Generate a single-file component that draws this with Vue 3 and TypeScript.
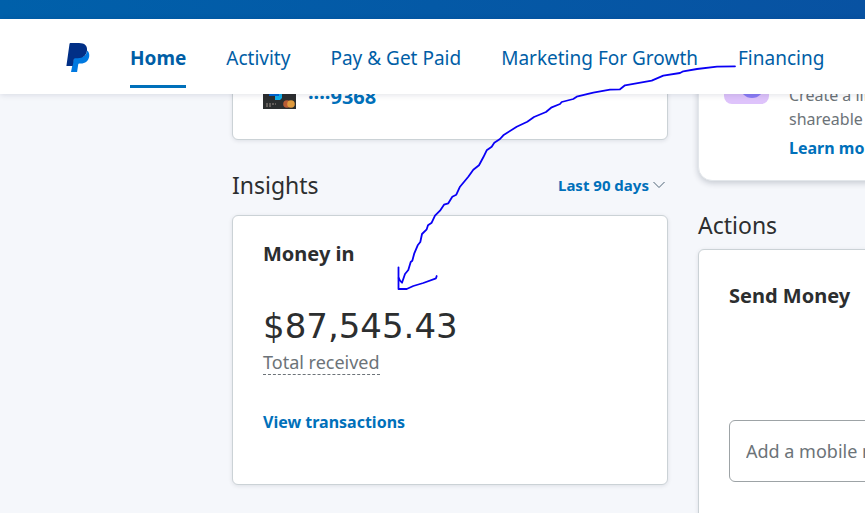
<script setup lang="ts">
import { ref } from 'vue'

interface NavItem {
  label: string
  active?: boolean
}

const navItems: NavItem[] = [
  { label: 'Home', active: true },
  { label: 'Activity' },
  { label: 'Pay & Get Paid' },
  { label: 'Marketing For Growth' },
  { label: 'Financing' },
  { label: 'More' },
]

const period = ref('Last 90 days')
const recipient = ref('')
</script>

<template>
  <div class="page">
    <div class="banner"></div>
    <header class="header">
      <a class="logo" href="#" aria-label="PayPal">
        <svg width="24" height="30" viewBox="0 0 24 30" aria-hidden="true">
          <path fill="#0079e0" d="M8 14h7c3.600 0 5.500-2.200 6-6.500 1.800 1.300 2.600 3.400 2.200 6-.7 4.600-4 7-8.400 7h-1.300c-.7 0-1.200.5-1.300 1.100L11.100 29H5z" />
          <path fill="#012f86" d="M4.300 0H13c5.600 0 8.500 2.700 8 7.500-.7 5-4 7.700-9.200 7.700H9.500c-.9 0-1.500.5-1.700 1.400L6.700 23H.4L3.500 1C3.600.4 3.900 0 4.300 0z" />
        </svg>
      </a>
      <nav class="nav" aria-label="Primary">
        <a v-for="item in navItems" :key="item.label" href="#" class="nav-link" :class="{ active: item.active }">{{ item.label }}</a>
      </nav>
    </header>

    <main class="content">
      <div class="column">
        <section class="card wallet">
          <svg class="bank-card" width="33" height="22" viewBox="0 0 33 22" aria-hidden="true">
            <rect width="33" height="22" fill="#2c2e2f" />
            <path d="M7 0h10v9h-5V9H6z" fill="#0067d5" />
            <path d="M12 9h4V5h3v6l-2 2h-5z" fill="#10aeea" />
            <path d="M3 17h10M3 19h5" stroke="#9a8e89" stroke-width="1" stroke-dasharray="2 1" />
            <circle cx="24" cy="17" r="3.800" fill="#b85c35" />
            <circle cx="28" cy="17" r="3.800" fill="#df9a3d" />
          </svg>
          <a href="#" class="link card-number">····9368</a>
        </section>

        <div class="section-head">
          <h2>Insights</h2>
          <div class="period">
            <select v-model="period" aria-label="Period">
              <option>Last 90 days</option>
            </select>
            <svg width="12" height="8" viewBox="0 0 12 8" aria-hidden="true">
              <path d="M.5 1 6 6.500 11.500 1" fill="none" stroke="#4f6577" stroke-width="1" />
            </svg>
          </div>
        </div>
        <section class="card insight">
          <h3>Money in</h3>
          <p class="amount">$87,545.43</p>
          <p class="caption"><span>Total received</span></p>
          <a href="#" class="link">View transactions</a>
        </section>
      </div>

      <div class="column">
        <section class="card promo">
          <svg class="promo-icon" width="45" height="45" viewBox="0 0 45 45" aria-hidden="true">
            <rect width="45" height="45" rx="8" fill="#dec3fb" />
            <circle cx="28" cy="27" r="12" fill="#8b7cf6" />
          </svg>
          <div class="promo-text">
            <p>Create a link</p>
            <p>shareable link</p>
            <a href="#" class="link">Learn more</a>
          </div>
        </section>

        <h2 class="actions-title">Actions</h2>
        <section class="card send">
          <h3>Send Money</h3>
          <input v-model="recipient" type="text" placeholder="Add a mobile number" aria-label="Add a mobile number" />
        </section>
      </div>
    </main>

    <svg class="annotation" width="865" height="513" viewBox="0 0 865 513" aria-hidden="true">
      <path d="M735 66.300 717 66.700 697 69 683.300 71.300 680 73 663.300 75.700 651.700 80.700 625 85.300 620 89.300 610 89.700 593.300 92.700 576.700 96.700 573.300 99 561.700 102 560 104 551.700 107.300 546 112 534 117 527.300 121.700 516.700 126.700 503.300 135.300 500 139 494.300 142.700 491.700 146.700 486.700 150.300 483.300 157.300 479 165.300 473.300 169.700 468.300 176.700 460 186.700 456.300 194.700 452.300 196.700 448.300 203.300 444 204.700 440 210.700 435 215.700 431.700 222.700 428 225.300 426.700 229.300 422 234 420.300 242 417.700 245.300 414.300 253.300 412.300 260.700 410.700 262 408.300 270 405 274 402 282.700 400 280.700 398.700 278" />
      <path d="M398.500 267.300V289H406.700L413.300 286 423.300 283 436 278.300 436.700 276" />
    </svg>
  </div>
</template>

<style>
body {
  background: #f5f7fb;
}
</style>

<style scoped>
.page {
  position: relative;
  height: 100vh;
  overflow: hidden;
  background: #f5f7fb;
  color: #2c2e2f;
  font: 16px/24px "Noto Sans", sans-serif;
}
.page * {
  box-sizing: border-box;
}
h2, h3, p {
  margin: 0;
}
h2 {
  font-size: 23px;
  line-height: 30px;
  font-weight: 400;
}
h3 {
  font-size: 20px;
  line-height: 28px;
  font-weight: 700;
}
.banner {
  height: 19px;
  background: linear-gradient(90deg, #0060aa, #0852a2);
}
.header {
  position: relative;
  z-index: 1;
  display: flex;
  height: 75px;
  padding-left: 66px;
  background: #fff;
  box-shadow: 0 1px 6px rgba(0, 20, 60, 0.12);
}
.logo {
  display: flex;
  flex: none;
  align-items: center;
  width: 64px;
  padding-top: 2px;
}
.nav {
  display: flex;
  gap: 40px;
  padding-bottom: 6px;
}
.nav-link {
  padding-top: 25px;
  color: #005ea6;
  font-size: 19px;
  line-height: 28px;
  white-space: nowrap;
  text-decoration: none;
}
.nav-link.active {
  border-bottom: 3px solid #0070ba;
  font-weight: 700;
}
.content {
  display: grid;
  grid-template-columns: minmax(436px, 1fr) minmax(280px, 1fr);
  gap: 30px;
  margin-top: -40px;
  padding-left: 232px;
}
.card {
  border: 1px solid #cbd2d6;
  border-radius: 6px;
  background: #fff;
  box-shadow: 0 1px 4px rgba(0, 20, 40, 0.1);
}
.link {
  color: #0070ba;
  font-weight: 700;
  text-decoration: none;
  white-space: nowrap;
}
.wallet {
  display: flex;
  align-items: flex-end;
  gap: 12px;
  height: 86px;
  padding: 0 30px 30px;
}
.card-number {
  font-size: 20px;
}
.section-head {
  display: flex;
  align-items: center;
  justify-content: space-between;
  padding: 30px 3px 15px 0;
}
.period {
  display: flex;
  align-items: center;
  gap: 4px;
}
.period select {
  appearance: none;
  padding: 0;
  border: 0;
  background: transparent;
  color: #0070ba;
  font: 700 15px/24px "Noto Sans", sans-serif;
}
.insight {
  height: 270px;
  padding: 24px 30px;
}
.amount {
  margin-top: 36px;
  font: 34px/44px "DejaVu Sans", sans-serif;
}
.caption {
  margin-bottom: 34px;
  color: #6c7378;
  font-size: 18px;
  line-height: 28px;
}
.caption span {
  display: inline-block;
  border-bottom: 1px dashed #6c7378;
  line-height: 24px;
}
.promo {
  display: flex;
  gap: 20px;
  height: 127px;
  padding: 4px 25px;
  border-color: #e3e7eb;
  border-radius: 14px;
  box-shadow: 0 2px 6px rgba(0, 20, 40, 0.2);
}
.promo-icon {
  flex: none;
}
.promo-text {
  padding-top: 24px;
  color: #6c7378;
  white-space: nowrap;
}
.promo-text .link {
  display: block;
  margin-top: 5px;
}
.actions-title {
  padding: 29px 0 9px;
}
.send {
  min-height: 300px;
  padding: 32px 30px;
}
.send input {
  width: 100%;
  height: 62px;
  margin-top: 110px;
  padding: 0 16px;
  border: 1px solid #9da3a6;
  border-radius: 6px;
  background: #fff;
  font: 18px/24px "Noto Sans", sans-serif;
}
.send input::placeholder {
  color: #6c7378;
  opacity: 1;
}
.annotation {
  position: absolute;
  z-index: 2;
  top: 0;
  left: 0;
  pointer-events: none;
}
.annotation path {
  fill: none;
  stroke: #0a00f5;
  stroke-width: 1.800;
  stroke-linejoin: round;
  stroke-linecap: round;
}
</style>
